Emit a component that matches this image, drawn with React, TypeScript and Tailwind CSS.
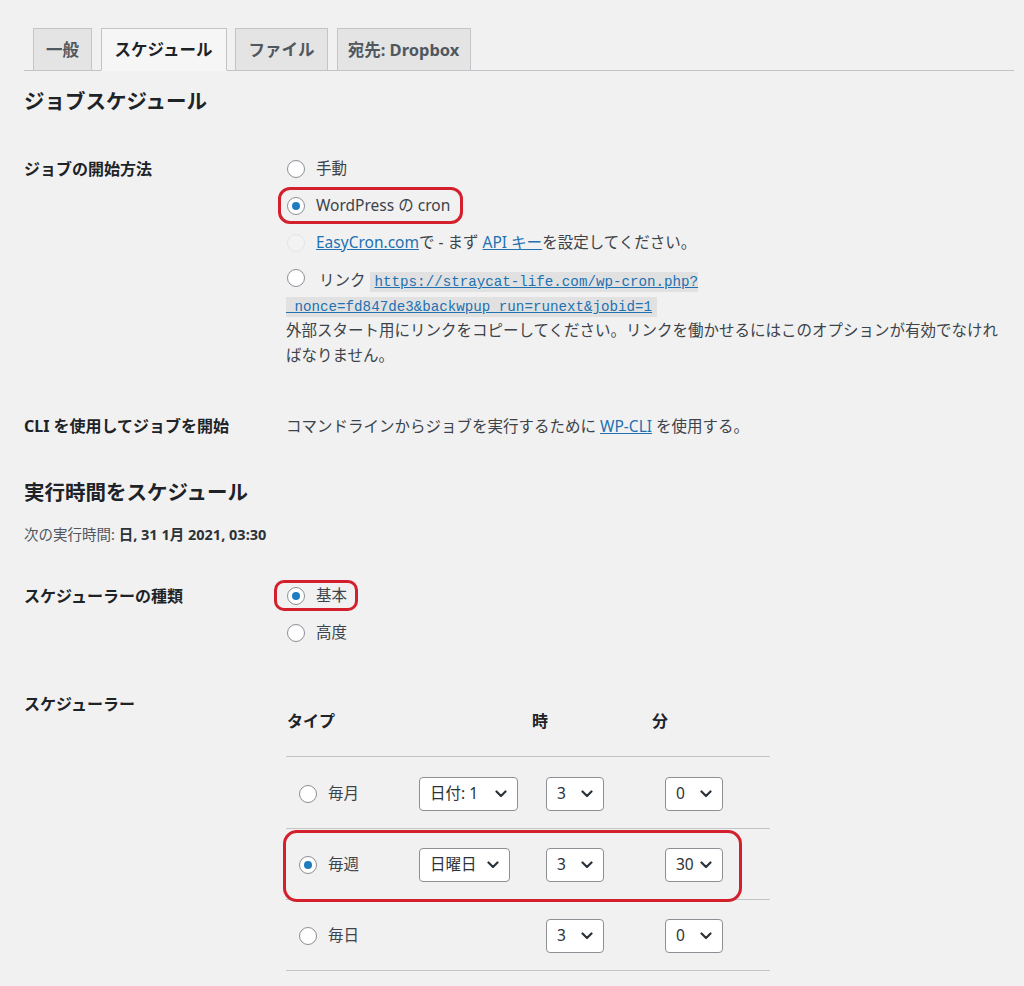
import React from 'react';

type RadioProps = {
  checked?: boolean;
  disabled?: boolean;
};

const Radio: React.FC<RadioProps> = ({ checked, disabled }) => (
  <span
    className={
      disabled
        ? 'inline-flex h-[18px] w-[18px] shrink-0 items-center justify-center rounded-full border border-[#e4e4e4] bg-[#f3f3f3] align-middle'
        : 'inline-flex h-[18px] w-[18px] shrink-0 items-center justify-center rounded-full border border-[#8c8f94] bg-white align-middle'
    }
  >
    {checked && <span className="h-2 w-2 rounded-full bg-[#1e7cc0]" />}
  </span>
);

type SelectProps = {
  value: string;
  width: string;
};

const Select: React.FC<SelectProps> = ({ value, width }) => (
  <div
    className={`flex h-[34px] ${width} items-center justify-between rounded-[4px] border border-[#8c8f94] bg-white pl-[10px] pr-[10px] text-[15.5px] text-[#2c3338]`}
  >
    <span>{value}</span>
    <svg width="12" height="8" viewBox="0 0 12 8" className="shrink-0">
      <path d="M1.5 1.5 L6 6 L10.5 1.5" fill="none" stroke="#2c3338" strokeWidth="2.2" strokeLinecap="round" strokeLinejoin="round" />
    </svg>
  </div>
);

const tabs = [
  { label: '一般', width: 'w-[59px]' },
  { label: 'スケジュール', width: 'w-[126px]', active: true },
  { label: 'ファイル', width: 'w-[93px]' },
  { label: '宛先: Dropbox', width: 'w-[134px]' },
];

const App: React.FC = () => {
  return (
    <div className="min-h-[986px] bg-[#f1f1f1] pl-6 pr-[10px] pt-7 text-[15.5px] text-[#3c434a] font-['Noto_Sans','Noto_Sans_CJK_JP',sans-serif]">
      {/* Tabs */}
      <div className="flex gap-[8.5px] border-b border-[#c3c4c7] pl-[9px]">
        {tabs.map((t) => (
          <div
            key={t.label}
            className={
              t.active
                ? `-mb-px flex h-[43px] ${t.width} items-center justify-center border border-[#c3c4c7] border-b-[#f6f6f6] bg-[#f6f6f6] pt-px text-[16.5px] font-bold text-[#1d2327]`
                : `-mb-px flex h-[43px] ${t.width} items-center justify-center border border-[#c3c4c7] bg-[#e4e4e4] pt-px text-[16.5px] font-bold text-[#50575e]`
            }
          >
            {t.label}
          </div>
        ))}
      </div>

      <h2 className="mt-4 text-[20.5px] font-bold leading-[28px] text-[#1d2327]">ジョブスケジュール</h2>

      {/* Job start method */}
      <div className="mt-[35px] flex">
        <div className="flex h-[37px] w-[262px] shrink-0 items-center text-[16px] font-bold text-[#1d2327]">ジョブの開始方法</div>
        <div className="flex-1">
          <div className="flex h-[37px] items-center gap-[11px] pl-px">
            <Radio />
            <span>手動</span>
          </div>
          <div className="relative flex h-[37px] items-center gap-[11px] pl-px">
            <Radio checked />
            <span>WordPress の cron</span>
            <div className="absolute left-[-8px] top-0 h-[37px] w-[185px] rounded-[12px] border-[3px] border-[#d3202c]" />
          </div>
          <div className="flex h-[37px] items-center gap-[11px] pl-px">
            <Radio disabled />
            <span>
              <a className="text-[#2271b1] underline">EasyCron.com</a>で - まず <a className="text-[#2271b1] underline">API キー</a>を設定してください。
            </span>
          </div>
          <div className="mt-[7px] leading-[25px]">
            <span className="ml-px mr-[14px] inline-flex translate-y-px">
              <Radio />
            </span>
            リンク{' '}
            <code className="bg-[#e1e1e1] px-[5px] py-[2px] font-['Liberation_Mono',monospace] text-[14.2px] leading-none text-[#2271b1] underline">
              https://straycat-life.com/wp-cron.php?
              <wbr />
              _nonce=fd847de3&amp;backwpup_run=runext&amp;jobid=1
            </code>
          </div>
          <p className="pr-[6px] leading-[25px]">
            外部スタート用にリンクをコピーしてください。リンクを働かせるにはこのオプションが有効でなければなりません。
          </p>
        </div>
      </div>

      {/* CLI */}
      <div className="mt-[46px] flex leading-[24px]">
        <div className="w-[262px] shrink-0 text-[16px] font-bold text-[#1d2327]">CLI を使用してジョブを開始</div>
        <div className="flex-1">
          コマンドラインからジョブを実行するために <a className="text-[#2271b1] underline">WP-CLI</a> を使用する。
        </div>
      </div>

      <h2 className="mt-[40px] text-[20.5px] font-bold leading-[28px] text-[#1d2327]">実行時間をスケジュール</h2>

      <p className="mt-[18px] text-[14.5px] leading-[20px] text-[#50575e]">
        次の実行時間: <b className="text-[#2c3338]">日, 31 1月 2021, 03:30</b>
      </p>

      {/* Scheduler type */}
      <div className="mt-[33px] flex">
        <div className="flex h-[37px] w-[262px] shrink-0 items-center text-[16px] font-bold text-[#1d2327]">スケジューラーの種類</div>
        <div className="flex-1">
          <div className="relative flex h-[37px] items-center gap-[11px] pl-px">
            <Radio checked />
            <span>基本</span>
            <div className="absolute left-[-12px] top-[3px] h-[31px] w-[84px] rounded-[10px] border-[3px] border-[#d3202c]" />
          </div>
          <div className="flex h-[37px] items-center gap-[11px] pl-px">
            <Radio />
            <span>高度</span>
          </div>
        </div>
      </div>

      {/* Scheduler */}
      <div className="mt-[41px] flex">
        <div className="w-[262px] shrink-0 text-[16px] font-bold leading-[24px] text-[#1d2327]">スケジューラー</div>
        <div className="w-[484px]">
          <div className="flex border-b border-[#c3c4c7] pb-[23px] pt-[17px] text-[16px] font-bold leading-[24px] text-[#1d2327]">
            <div className="w-[246px] pl-px">タイプ</div>
            <div className="w-[120px]">時</div>
            <div>分</div>
          </div>

          <div className="flex h-[72px] items-center border-b border-[#c3c4c7] pt-[2px]">
            <div className="flex w-[133px] items-center gap-[11px] pl-[13px]">
              <Radio />
              <span>毎月</span>
            </div>
            <div className="w-[127px]">
              <Select value="日付: 1" width="w-[99px]" />
            </div>
            <div className="w-[119px]">
              <Select value="3" width="w-[58px]" />
            </div>
            <Select value="0" width="w-[58px]" />
          </div>

          <div className="relative flex h-[71px] items-center border-b border-[#c3c4c7] pt-[2px]">
            <div className="flex w-[133px] items-center gap-[11px] pl-[13px]">
              <Radio checked />
              <span>毎週</span>
            </div>
            <div className="w-[127px]">
              <Select value="日曜日" width="w-[91px]" />
            </div>
            <div className="w-[119px]">
              <Select value="3" width="w-[58px]" />
            </div>
            <Select value="30" width="w-[58px]" />
            <div className="absolute left-[-3px] top-px h-[72px] w-[459px] rounded-[14px] border-[3px] border-[#d3202c]" />
          </div>

          <div className="flex h-[71px] items-center border-b border-[#c3c4c7] pt-[2px]">
            <div className="flex w-[133px] items-center gap-[11px] pl-[13px]">
              <Radio />
              <span>毎日</span>
            </div>
            <div className="w-[127px]" />
            <div className="w-[119px]">
              <Select value="3" width="w-[58px]" />
            </div>
            <Select value="0" width="w-[58px]" />
          </div>
        </div>
      </div>
    </div>
  );
};

export default App;
